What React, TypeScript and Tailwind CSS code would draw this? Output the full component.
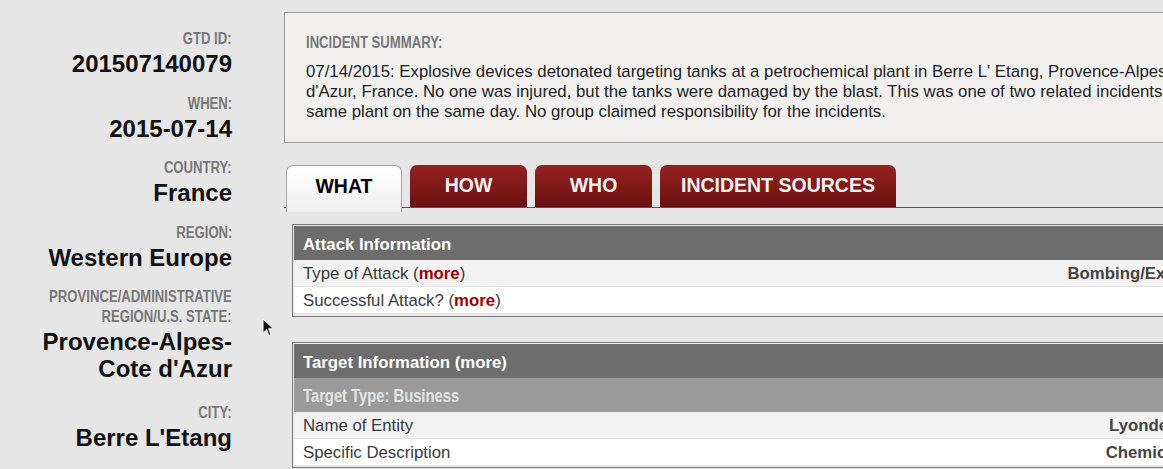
import React from 'react';

// condensed labels: no narrow face installed, so squeeze Liberation Sans bold
const squeeze = 'inline-block scale-x-[0.82] whitespace-nowrap';

const facts: { label: string[]; value: string[]; extra?: boolean }[] = [
  { label: ['GTD ID:'], value: ['201507140079'] },
  { label: ['WHEN:'], value: ['2015-07-14'] },
  { label: ['COUNTRY:'], value: ['France'] },
  { label: ['REGION:'], value: ['Western Europe'] },
  { label: ['PROVINCE/ADMINISTRATIVE', 'REGION/U.S. STATE:'], value: ['Provence-Alpes-', "Cote d'Azur"], extra: true },
  { label: ['CITY:'], value: ["Berre L'Etang"] },
];

function More() {
  return (
    <>
      (<span className="font-bold text-[#990000]">more</span>)
    </>
  );
}

function Row({ label, value, shaded }: { label: React.ReactNode; value?: string; shaded?: boolean }) {
  return (
    <div
      className={`flex items-center justify-between h-[27px] pl-[9px] pr-[12px] pt-px border-b border-[#e2e2e2] text-[16.8px] text-[#3a3a3a] ${
        shaded ? 'bg-[#f2f2f2]' : 'bg-white'
      }`}
    >
      <span className="whitespace-nowrap">{label}</span>
      {value && <span className="whitespace-nowrap font-bold text-[#444]">{value}</span>}
    </div>
  );
}

export default function App() {
  return (
    <div className="relative h-[469px] w-full overflow-hidden bg-[#e6e6e6] font-['Liberation_Sans',Arial,sans-serif]">
      <div className="flex">
        {/* Sidebar */}
        <div className="w-[232px] shrink-0 pt-[29px] text-right">
          {facts.map((f) => (
            <div key={f.label[0]} className={f.extra ? 'mb-[21px]' : 'mb-[16.5px]'}>
              <div className="text-[16px] leading-[20px] font-bold text-[#777]">
                {f.label.map((l) => (
                  <div key={l}>
                    <span className={`${squeeze} origin-right`}>{l}</span>
                  </div>
                ))}
              </div>
              <div className="mt-px text-[24px] leading-[27px] font-bold text-[#111]">
                {f.value.map((v) => (
                  <div key={v}>{v}</div>
                ))}
              </div>
            </div>
          ))}
        </div>

        {/* Main */}
        <div className="ml-[52px] w-[963px] shrink-0 pt-3">
          <div className="border border-[#999] bg-[#f1f0ef] px-[21px] pt-5 pb-5">
            <div className="text-[16px] leading-[20px] font-bold text-[#777]">
              <span className={`${squeeze} origin-left`}>INCIDENT SUMMARY:</span>
            </div>
            <p className="mt-[9px] text-[16.8px] leading-[20px] text-[#222]">
              07/14/2015: Explosive devices detonated targeting tanks at a petrochemical plant in Berre L' Etang,
              Provence-Alpes-Cote d'Azur, France. No one was injured, but the tanks were damaged by the blast. This
              was one of two related incidents at the same plant on the same day. No group claimed responsibility for
              the incidents.
            </p>
          </div>

          {/* Tabs */}
          <div className="mt-[22px] flex items-start gap-2 border-b border-[#555] pl-[2px] h-[43px]">
            <div className="relative z-10 flex h-[47px] w-[116px] items-center justify-center rounded-t-[7px] border-x border-t border-[#a5a5a5] bg-gradient-to-b from-white to-[#efefef] pb-[4px] text-[19.5px] font-bold text-black">
              WHAT
            </div>
            {[
              ['HOW', 'w-[117px]'],
              ['WHO', 'w-[117px]'],
              ['INCIDENT SOURCES', 'w-[236px]'],
            ].map(([t, w]) => (
              <div
                key={t}
                className={`${w} flex h-[42px] items-center justify-center whitespace-nowrap rounded-t-[7px] bg-gradient-to-b from-[#942323] to-[#6c1010] text-[19.5px] font-bold text-[#f0f0f0]`}
              >
                {t}
              </div>
            ))}
          </div>

          <div className="px-2">
            {/* Attack Information */}
            <div className="mt-[16px] border border-[#7a7a7a] bg-[#e9e9e9] p-px pb-[2px]">
              <div className="flex h-[34px] items-center bg-[#6d6d6d] pl-[9px] pt-[3px] text-[16.8px] font-bold text-white">
                Attack Information
              </div>
              <Row
                shaded
                label={
                  <>
                    Type of Attack <More />
                  </>
                }
                value="Bombing/Explosion"
              />
              <Row
                label={
                  <>
                    Successful Attack? <More />
                  </>
                }
                value="Yes"
              />
            </div>

            {/* Target Information */}
            <div className="mt-[25px] border border-[#7a7a7a] bg-[#e9e9e9] p-px">
              <div className="flex h-[34px] items-center bg-[#6d6d6d] pl-[9px] pt-[3px] text-[16.8px] font-bold text-white">
                Target Information (more)
              </div>
              <div className="flex h-[34px] items-center bg-[#9a9a9a] pl-[9px] pt-[3px] text-[18px] font-bold text-[#e4e4e4]">
                <span className={`${squeeze} origin-left`}>Target Type: Business</span>
              </div>
              <Row shaded label="Name of Entity" value="Lyondellbasell" />
              <Row label="Specific Description" value="Chemical plant" />
            </div>
          </div>
        </div>
      </div>

      {/* mouse cursor */}
      <svg className="absolute left-[262px] top-[318px]" width="13" height="20" viewBox="0 0 13 20">
        <path d="M1 1 L1 15 L4.5 11.5 L7 17.5 L9 16.6 L6.6 10.8 L11.5 10.8 Z" fill="#111" stroke="#fff" strokeWidth="1" />
      </svg>
    </div>
  );
}
